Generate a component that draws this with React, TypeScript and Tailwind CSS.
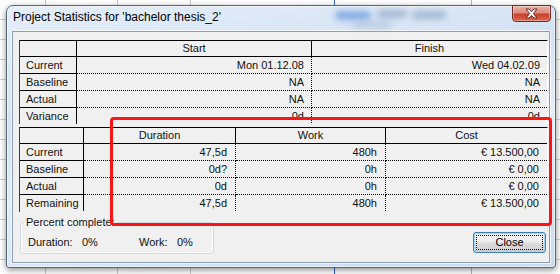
import React from "react";

type Row = { label: string; values: string[] };

const topRows: Row[] = [
  { label: "Current", values: ["Mon 01.12.08", "Wed 04.02.09"] },
  { label: "Baseline", values: ["NA", "NA"] },
  { label: "Actual", values: ["NA", "NA"] },
  { label: "Variance", values: ["0d", "0d"] },
];

const bottomRows: Row[] = [
  { label: "Current", values: ["47,5d", "480h", "€ 13.500,00"] },
  { label: "Baseline", values: ["0d?", "0h", "€ 0,00"] },
  { label: "Actual", values: ["0d", "0h", "€ 0,00"] },
  { label: "Remaining", values: ["47,5d", "480h", "€ 13.500,00"] },
];

interface TableProps {
  heads: string[];
  rows: Row[];
  gridClass: string;
  boxClass: string;
  padClass: string;
  lastRowOpen?: boolean;
}

const StatTable = ({ heads, rows, gridClass, boxClass, padClass, lastRowOpen }: TableProps) => {
  return (
    <div
      className={`ml-[6px] w-[529px] overflow-hidden border-t border-l border-t-black border-l-[#3a3a3a] border-r border-r-white ${boxClass}`}
    >
      <div className={`grid ${gridClass}`}>
        <div className="h-[16px] border-r border-b border-black" />
        {heads.map((h, i) => (
          <div
            key={h}
            className={`h-[16px] border-b border-black text-center leading-[15px] ${
              i < heads.length - 1 ? "border-r" : ""
            }`}
          >
            {h}
          </div>
        ))}
        {rows.map((r, ri) => {
          const last = lastRowOpen && ri === rows.length - 1;
          return (
            <React.Fragment key={r.label}>
              <div
                className={`border-r border-black pl-[6px] ${
                  last ? "h-[16px] leading-[16px]" : "h-[17px] border-b leading-[16px]"
                }`}
              >
                {r.label}
              </div>
              {r.values.map((v, vi) => (
                <div
                  key={vi}
                  className={`border-dotted border-black text-right whitespace-nowrap ${padClass} ${
                    last ? "h-[16px] leading-[16px]" : "h-[17px] border-b leading-[16px]"
                  } ${vi < r.values.length - 1 ? "border-r" : ""}`}
                >
                  {v}
                </div>
              ))}
            </React.Fragment>
          );
        })}
      </div>
    </div>
  );
};

const CloseX = () => (
  <svg width="15" height="11" viewBox="0 0 15 11">
    <path
      d="M2 1 L5 1 L7.5 3.6 L10 1 L13 1 L9.3 5.5 L13 10 L10 10 L7.5 7.4 L5 10 L2 10 L5.7 5.5 Z"
      fill="#ffffff"
      stroke="#5a1a14"
      strokeWidth="0.9"
      strokeLinejoin="round"
    />
  </svg>
);

export default function App() {
  return (
    <div className="relative w-[560px] h-[274px] overflow-hidden bg-white bg-[linear-gradient(to_right,transparent_45px,#c9c9c9_45px,#c9c9c9_46px,transparent_46px,transparent_117px,#c9c9c9_117px,#c9c9c9_118px,transparent_118px,transparent_190px,#c9c9c9_190px,#c9c9c9_191px,transparent_191px,transparent_334px,#2f5fd8_334px,#2f5fd8_335px,transparent_335px,transparent_471px,#b5b5b5_471px,#b5b5b5_472px,transparent_472px),linear-gradient(transparent_19px,#d4d4d4_19px,#d4d4d4_20px,transparent_20px)] bg-[size:100%_100%,100%_20px] pl-[6px] pt-[5px] font-['Liberation_Sans',Arial,sans-serif] text-[11px] text-[#101010]">
      {/* dialog window */}
      <div className="flex flex-col w-[550px] h-[263px] rounded-t-[7px] rounded-b-[3px] border border-[#56667a] bg-[linear-gradient(170deg,#e4eef9_0%,#d3e2f3_35%,#e2edf8_55%,#c9dbef_100%)] shadow-[0_2px_6px_rgba(0,0,0,0.45),inset_0_0_0_1px_rgba(255,255,255,0.55)]">
        {/* title bar */}
        <div className="relative flex items-start h-[25px] shrink-0">
          <div className="pl-[6px] pt-[3px] leading-[16px] text-[12px] text-black whitespace-nowrap">
            Project Statistics for 'bachelor thesis_2'
          </div>
          <div className="absolute left-[328px] top-[5px] h-[9px] w-[36px] rounded-full bg-[#6f9be0] blur-[3px] opacity-80" />
          <div className="absolute left-[370px] top-[4px] h-[8px] w-[30px] rounded-full bg-[#8ea4c4] blur-[3px] opacity-70" />
          <div className="absolute left-[405px] top-[5px] h-[8px] w-[34px] rounded-full bg-[#8ea4c4] blur-[3px] opacity-70" />
          <div className="absolute left-[345px] top-[15px] h-[7px] w-[40px] rounded-full bg-[#a8bad3] blur-[3px] opacity-60" />
          <div className="ml-auto mr-[4px] -mt-px flex h-[17px] w-[39px] items-center justify-center rounded-b-[4px] border border-[#6e2a22] bg-[linear-gradient(#eab4aa_0%,#dc8a7c_45%,#c7402f_55%,#d9674f_100%)] shadow-[inset_0_0_0_1px_rgba(255,255,255,0.35)]">
            <CloseX />
          </div>
        </div>

        {/* client area */}
        <div className="mx-[5px] mb-[4px] flex-1 flex flex-col border border-[#8e9eb2] bg-[#f0f0f0] shadow-[0_0_0_1px_rgba(255,255,255,0.7)]">
          <div className="mt-[8px]">
            <StatTable
              heads={["Start", "Finish"]}
              rows={topRows}
              gridClass="grid-cols-[57px_235px_235px]"
              boxClass="h-[84px]"
              padClass="pr-[7px]"
            />
          </div>
          <div className="mt-[3px]">
            <StatTable
              heads={["Duration", "Work", "Cost"]}
              rows={bottomRows}
              gridClass="grid-cols-[64px_152px_150px_161px]"
              boxClass="h-[85px]"
              padClass="pr-[8px]"
              lastRowOpen
            />
          </div>

          <div className="mt-[3px] flex items-end justify-between pl-[7px] pr-[3px]">
            <fieldset className="w-[194px] h-[39px] rounded-[3px] border border-[#d0d8de] shadow-[inset_0_0_0_1px_#ffffff]">
              <legend className="ml-[3px] px-[2px] leading-[14px]">Percent complete:</legend>
              <div className="flex pl-[7px] pt-[6px] leading-[14px]">
                <span className="w-[54px]">Duration:</span>
                <span className="w-[57px]">0%</span>
                <span className="w-[38px]">Work:</span>
                <span>0%</span>
              </div>
            </fieldset>
            <button className="mb-[1px] flex h-[21px] w-[73px] items-center justify-center rounded-[3px] border border-[#3c7fb1] bg-[linear-gradient(#f4f4f4_0%,#ececec_48%,#dcdcdc_52%,#cfcfcf_100%)] p-[2px] shadow-[inset_0_0_0_1px_#a6d6f2]">
              <span className="flex h-full w-full items-center justify-center border border-dotted border-black leading-[13px] text-black">
                Close
              </span>
            </button>
          </div>
        </div>
      </div>

      {/* red highlight */}
      <div className="absolute left-[110px] top-[117px] w-[442px] h-[109px] rounded-[4px] border-[3px] border-[#fb1414]" />
    </div>
  );
}
